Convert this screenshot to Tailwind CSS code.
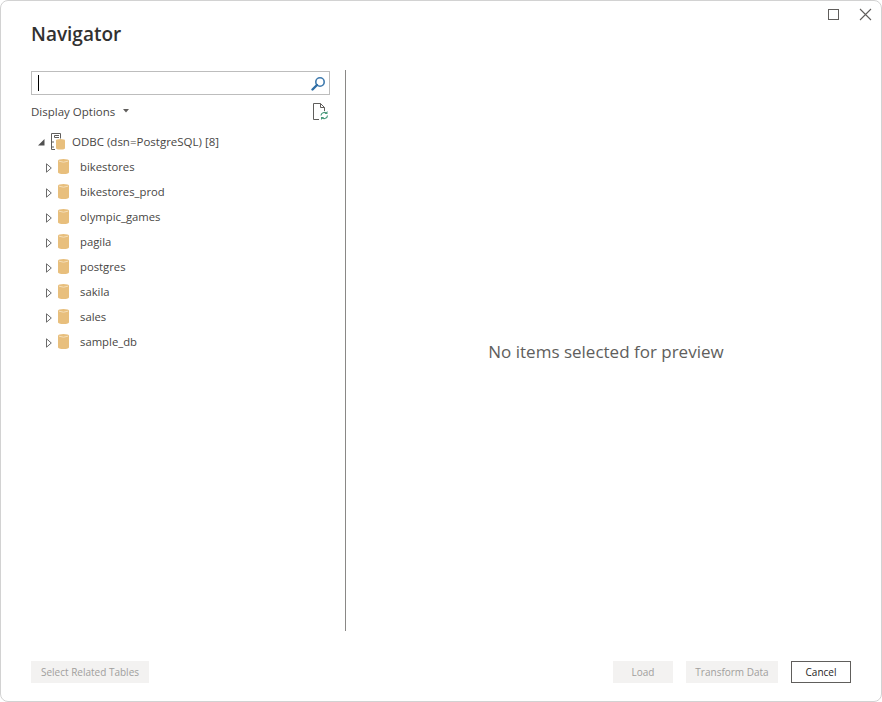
<!DOCTYPE html>
<html><head><meta charset="utf-8"><script src="https://cdn.jsdelivr.net/npm/@tailwindcss/browser@4"></script></head>
<body class="bg-white">
<div class="w-[882px] h-[702px] bg-white border border-[#d2d2d2] rounded-[8px] flex flex-col font-['Open_Sans',sans-serif] text-[#333] overflow-hidden">
  <div class="h-[69px] pl-[30px] pr-[9px] flex justify-between shrink-0">
    <h1 class="mt-[20px] text-[19px] leading-[27px] font-semibold text-[#323130]">Navigator</h1>
    <div class="flex gap-[20px] mt-[7px] items-start">
      <svg width="11" height="11" viewBox="0 0 11 11" class="mt-[1px]"><rect x="0.5" y="0.5" width="10" height="10" fill="none" stroke="#605e5c"/></svg>
      <svg width="13" height="13" viewBox="0 0 13 13"><path d="M1 1L12 12M12 1L1 12" stroke="#605e5c" stroke-width="1.1" fill="none"/></svg>
    </div>
  </div>
  <div class="flex h-[561px] shrink-0">
    <div class="w-[344px] pl-[30px] shrink-0">
      <div class="w-[299px] h-[24px] mt-[1px] border border-[#bdbdbd] flex items-center justify-between pl-[6px] pr-[3px]">
        <div class="w-[1px] h-[16px] bg-black"></div>
        <svg width="15" height="15" viewBox="0 0 15 15"><circle cx="9" cy="6" r="4.2" fill="none" stroke="#3e79ad" stroke-width="1.6"/><path d="M6 9L1.5 13.5" stroke="#2f6ea5" stroke-width="2.4" stroke-linecap="round"/></svg>
      </div>
      <div class="h-[34px] w-[299px] flex items-center justify-between">
        <div class="flex items-center text-[11.5px] text-[#484644]">Display Options
          <svg width="6" height="4" viewBox="0 0 6 4" class="ml-[8px] mb-[2px]"><path d="M0 0H6L3 3.5Z" fill="#605e5c"/></svg>
        </div>
        <svg width="16" height="18" viewBox="0 0 16 18" class="mr-[1px]"><path d="M0.5 0.5H7.5L11.5 4.5V8M7.5 0.5V4.5H11.5M0.5 0.5V16.5H6" fill="none" stroke="#605e5c"/><path d="M8 12.5A3.2 3.2 0 0 1 13.5 10.5M14.5 12.5A3.2 3.2 0 0 1 9 14.5" fill="none" stroke="#4a9a7c" stroke-width="1.2"/><path d="M14.5 8V11H11.5ZM8 17V14H11Z" fill="#4a9a7c"/></svg>
      </div>
      <div class="h-[25px] flex items-center">
        <svg width="8" height="8" viewBox="0 0 8 8" class="ml-[6px]"><path d="M7.5 1V7.5H1Z" fill="#505050"/></svg>
        <svg width="14" height="17" viewBox="0 0 14 17" class="ml-[6px]"><path d="M0.5 0.5H9.5V5.5M3.5 2.5H8M3.5 4.5H8M3.5 2.5V4.5M0.5 0.5V16.5H4M2 8V10M2 13V15" fill="none" stroke="#605e5c"/><path d="M5 7.5Q5 6 9.5 6T14 7.5V15Q14 16.5 9.5 16.5T5 15Z" fill="#e8bf7d"/></svg>
        <span class="ml-[7px] text-[11.5px] text-[#484644] whitespace-nowrap">ODBC (dsn=PostgreSQL) [8]</span>
      </div>
      <ul class="text-[11.3px] text-[#484644] mt-[1px]">
        <li class="h-[25px] flex items-center"><svg width="6" height="10" viewBox="0 0 6 10" class="ml-[15px]"><path d="M0.5 0.8V9.2L5.3 5Z" fill="none" stroke="#6b6b6b"/></svg><svg width="11" height="15" viewBox="0 0 11 15" class="ml-[6px] mb-[2px]"><path d="M0 1.8Q0 0 5.5 0T11 1.8V13.2Q11 15 5.5 15T0 13.2Z" fill="#e8bf7d"/><path d="M1 2.2Q5.5 4.2 10 2.2" fill="none" stroke="#f5dfba"/></svg><span class="ml-[11px]">bikestores</span></li>
        <li class="h-[25px] flex items-center"><svg width="6" height="10" viewBox="0 0 6 10" class="ml-[15px]"><path d="M0.5 0.8V9.2L5.3 5Z" fill="none" stroke="#6b6b6b"/></svg><svg width="11" height="15" viewBox="0 0 11 15" class="ml-[6px] mb-[2px]"><path d="M0 1.8Q0 0 5.5 0T11 1.8V13.2Q11 15 5.5 15T0 13.2Z" fill="#e8bf7d"/><path d="M1 2.2Q5.5 4.2 10 2.2" fill="none" stroke="#f5dfba"/></svg><span class="ml-[11px]">bikestores_prod</span></li>
        <li class="h-[25px] flex items-center"><svg width="6" height="10" viewBox="0 0 6 10" class="ml-[15px]"><path d="M0.5 0.8V9.2L5.3 5Z" fill="none" stroke="#6b6b6b"/></svg><svg width="11" height="15" viewBox="0 0 11 15" class="ml-[6px] mb-[2px]"><path d="M0 1.8Q0 0 5.5 0T11 1.8V13.2Q11 15 5.5 15T0 13.2Z" fill="#e8bf7d"/><path d="M1 2.2Q5.5 4.2 10 2.2" fill="none" stroke="#f5dfba"/></svg><span class="ml-[11px]">olympic_games</span></li>
        <li class="h-[25px] flex items-center"><svg width="6" height="10" viewBox="0 0 6 10" class="ml-[15px]"><path d="M0.5 0.8V9.2L5.3 5Z" fill="none" stroke="#6b6b6b"/></svg><svg width="11" height="15" viewBox="0 0 11 15" class="ml-[6px] mb-[2px]"><path d="M0 1.8Q0 0 5.5 0T11 1.8V13.2Q11 15 5.5 15T0 13.2Z" fill="#e8bf7d"/><path d="M1 2.2Q5.5 4.2 10 2.2" fill="none" stroke="#f5dfba"/></svg><span class="ml-[11px]">pagila</span></li>
        <li class="h-[25px] flex items-center"><svg width="6" height="10" viewBox="0 0 6 10" class="ml-[15px]"><path d="M0.5 0.8V9.2L5.3 5Z" fill="none" stroke="#6b6b6b"/></svg><svg width="11" height="15" viewBox="0 0 11 15" class="ml-[6px] mb-[2px]"><path d="M0 1.8Q0 0 5.5 0T11 1.8V13.2Q11 15 5.5 15T0 13.2Z" fill="#e8bf7d"/><path d="M1 2.2Q5.5 4.2 10 2.2" fill="none" stroke="#f5dfba"/></svg><span class="ml-[11px]">postgres</span></li>
        <li class="h-[25px] flex items-center"><svg width="6" height="10" viewBox="0 0 6 10" class="ml-[15px]"><path d="M0.5 0.8V9.2L5.3 5Z" fill="none" stroke="#6b6b6b"/></svg><svg width="11" height="15" viewBox="0 0 11 15" class="ml-[6px] mb-[2px]"><path d="M0 1.8Q0 0 5.5 0T11 1.8V13.2Q11 15 5.5 15T0 13.2Z" fill="#e8bf7d"/><path d="M1 2.2Q5.5 4.2 10 2.2" fill="none" stroke="#f5dfba"/></svg><span class="ml-[11px]">sakila</span></li>
        <li class="h-[25px] flex items-center"><svg width="6" height="10" viewBox="0 0 6 10" class="ml-[15px]"><path d="M0.5 0.8V9.2L5.3 5Z" fill="none" stroke="#6b6b6b"/></svg><svg width="11" height="15" viewBox="0 0 11 15" class="ml-[6px] mb-[2px]"><path d="M0 1.8Q0 0 5.5 0T11 1.8V13.2Q11 15 5.5 15T0 13.2Z" fill="#e8bf7d"/><path d="M1 2.2Q5.5 4.2 10 2.2" fill="none" stroke="#f5dfba"/></svg><span class="ml-[11px]">sales</span></li>
        <li class="h-[25px] flex items-center"><svg width="6" height="10" viewBox="0 0 6 10" class="ml-[15px]"><path d="M0.5 0.8V9.2L5.3 5Z" fill="none" stroke="#6b6b6b"/></svg><svg width="11" height="15" viewBox="0 0 11 15" class="ml-[6px] mb-[2px]"><path d="M0 1.8Q0 0 5.5 0T11 1.8V13.2Q11 15 5.5 15T0 13.2Z" fill="#e8bf7d"/><path d="M1 2.2Q5.5 4.2 10 2.2" fill="none" stroke="#f5dfba"/></svg><span class="ml-[11px]">sample_db</span></li>
      </ul>
    </div>
    <div class="w-[1px] bg-[#8a8886] shrink-0"></div>
    <div class="flex-1 flex items-center justify-center pr-[15px]">
      <span class="relative top-[1px] text-[17px] text-[#605e5c]">No items selected for preview</span>
    </div>
  </div>
  <div class="flex justify-between items-start pl-[30px] pr-[30px] pt-[30px]">
    <button class="w-[118px] h-[22px] bg-[#f3f2f1] text-[10px] text-[#a19f9d] pt-[1px]">Select Related Tables</button>
    <div class="flex">
      <button class="w-[60px] h-[22px] bg-[#f3f2f1] text-[10px] text-[#a19f9d] pt-[1px]">Load</button>
      <button class="w-[92px] h-[22px] ml-[13px] bg-[#f3f2f1] text-[10px] text-[#a19f9d] pt-[1px]">Transform Data</button>
      <button class="w-[60px] h-[22px] ml-[13px] border border-[#605e5c] text-[10px] text-[#252423] pt-[1px]">Cancel</button>
    </div>
  </div>
</div>
</body></html>
